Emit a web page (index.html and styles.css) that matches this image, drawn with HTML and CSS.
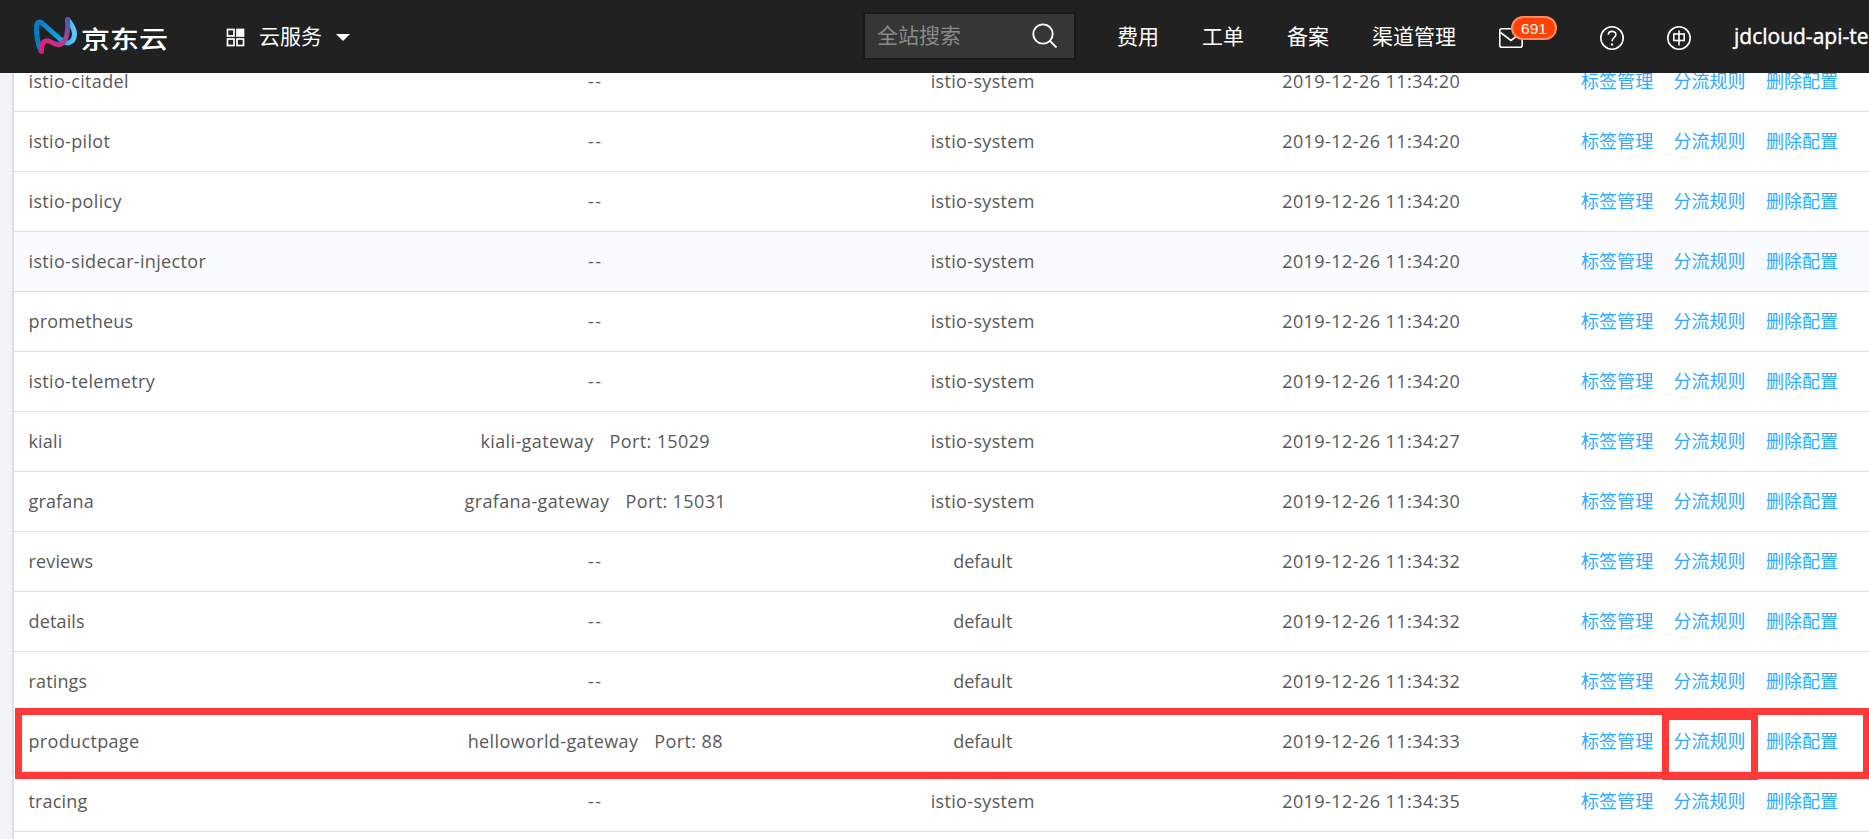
FILE: index.html
```html
<!DOCTYPE html>
<html lang="zh-CN">
<head>
<meta charset="utf-8">
<title>京东云</title>
<link rel="stylesheet" href="styles.css">
</head>
<body>
<header class="topbar">
  <a class="logo">
    <svg class="logo-mark" width="46" height="42" viewBox="0 0 46 42" fill="none" stroke-linecap="round" stroke-linejoin="round">
      <defs>
        <linearGradient id="blue" x1="0" y1="0" x2="1" y2="0"><stop offset="0" stop-color="#0879c0"/><stop offset=".6" stop-color="#0da5e2"/><stop offset="1" stop-color="#5cc8f5"/></linearGradient>
        <linearGradient id="pink" x1="0" y1="1" x2="1" y2="0"><stop offset="0" stop-color="#f0117f"/><stop offset=".55" stop-color="#b83c90"/><stop offset="1" stop-color="#4c5cad"/></linearGradient>
      </defs>
      <path d="M8 35C4 27 3 15 3.500 10C4 6 6.500 5 9.500 7.500L27 23C34 30 41 27 41.500 18C41.500 12 38 8 35 4" stroke="url(#blue)" stroke-width="5"/>
      <path d="M8.500 35.500C8 25 13 23 18 26C29 33 36 25 34.500 3.500" stroke="url(#pink)" stroke-width="5"/>
    </svg>
    <span class="logo-text">京东云</span>
  </a>
  <a class="services">
    <svg width="20" height="20" viewBox="0 0 20 20" fill="none" stroke="#fff" stroke-width="1.700"><rect x="1.500" y="1.500" width="6.500" height="6.500"/><rect x="11" y="1.500" width="6.500" height="6.500" fill="#fff"/><rect x="1.500" y="11" width="6.500" height="6.500"/><rect x="11" y="11" width="6.500" height="6.500"/></svg>
    <span class="services-text">云服务</span>
    <svg width="14" height="7" viewBox="0 0 14 7"><path d="M0 0H14L7 7Z" fill="#fff"/></svg>
  </a>
  <div class="search">
    <span>全站搜索</span>
    <svg width="26" height="26" viewBox="0 0 26 26" fill="none" stroke="#fff" stroke-width="1.800"><circle cx="11" cy="11" r="9.700"/><path d="M18 18L24.500 24.500"/></svg>
  </div>
  <nav class="nav">
    <a>费用</a><a>工单</a><a>备案</a><a>渠道管理</a>
  </nav>
  <div class="mail">
    <svg width="24" height="20" viewBox="0 0 24 20" fill="none" stroke="#fff" stroke-width="1.600"><rect x=".8" y=".8" width="22.400" height="18.400" rx="2"/><path d="M1.500 4.500L12 12.500L22.500 4.500"/></svg>
    <span class="badge">691</span>
  </div>
  <svg class="help" width="24" height="24" viewBox="0 0 24 24" fill="none" stroke="#fff" stroke-width="1.600"><circle cx="12" cy="12" r="11.200"/><path d="M8.300 8.800C8.300 4.200 15.900 4.300 15.900 8.600C15.900 11.300 12 11.800 12 15.300"/><path d="M12 17.500V19.500" stroke-width="2.200"/></svg>
  <svg class="lang" width="24" height="24" viewBox="0 0 24 24" fill="none" stroke="#fff" stroke-width="1.600"><circle cx="12" cy="12" r="11.200"/><rect x="6.800" y="8" width="10.400" height="6.500"/><path d="M12 4.500V19.500"/></svg>
  <span class="user">jdcloud-api-te</span>
</header>
<main class="panel">
  <div class="row"><span class="name wide">istio-citadel</span><span class="none">--</span><span class="wide">istio-system</span><span class="time">2019-12-26 11:34:20</span><div class="actions"><a>标签管理</a><a>分流规则</a><a>删除配置</a></div></div>
  <div class="row"><span class="name wide">istio-pilot</span><span class="none">--</span><span class="wide">istio-system</span><span class="time">2019-12-26 11:34:20</span><div class="actions"><a>标签管理</a><a>分流规则</a><a>删除配置</a></div></div>
  <div class="row"><span class="name wide">istio-policy</span><span class="none">--</span><span class="wide">istio-system</span><span class="time">2019-12-26 11:34:20</span><div class="actions"><a>标签管理</a><a>分流规则</a><a>删除配置</a></div></div>
  <div class="row active"><span class="name wide">istio-sidecar-injector</span><span class="none">--</span><span class="wide">istio-system</span><span class="time">2019-12-26 11:34:20</span><div class="actions"><a>标签管理</a><a>分流规则</a><a>删除配置</a></div></div>
  <div class="row"><span class="name">prometheus</span><span class="none">--</span><span class="wide">istio-system</span><span class="time">2019-12-26 11:34:20</span><div class="actions"><a>标签管理</a><a>分流规则</a><a>删除配置</a></div></div>
  <div class="row"><span class="name wide">istio-telemetry</span><span class="none">--</span><span class="wide">istio-system</span><span class="time">2019-12-26 11:34:20</span><div class="actions"><a>标签管理</a><a>分流规则</a><a>删除配置</a></div></div>
  <div class="row"><span class="name">kiali</span><span class="gateway"><span>kiali-gateway</span><span>Port: 15029</span></span><span class="wide">istio-system</span><span class="time">2019-12-26 11:34:27</span><div class="actions"><a>标签管理</a><a>分流规则</a><a>删除配置</a></div></div>
  <div class="row"><span class="name">grafana</span><span class="gateway"><span>grafana-gateway</span><span>Port: 15031</span></span><span class="wide">istio-system</span><span class="time">2019-12-26 11:34:30</span><div class="actions"><a>标签管理</a><a>分流规则</a><a>删除配置</a></div></div>
  <div class="row"><span class="name">reviews</span><span class="none">--</span><span>default</span><span class="time">2019-12-26 11:34:32</span><div class="actions"><a>标签管理</a><a>分流规则</a><a>删除配置</a></div></div>
  <div class="row"><span class="name">details</span><span class="none">--</span><span>default</span><span class="time">2019-12-26 11:34:32</span><div class="actions"><a>标签管理</a><a>分流规则</a><a>删除配置</a></div></div>
  <div class="row"><span class="name">ratings</span><span class="none">--</span><span>default</span><span class="time">2019-12-26 11:34:32</span><div class="actions"><a>标签管理</a><a>分流规则</a><a>删除配置</a></div></div>
  <div class="row marked"><span class="name wide">productpage</span><span class="gateway"><span>helloworld-gateway</span><span>Port: 88</span></span><span>default</span><span class="time">2019-12-26 11:34:33</span><div class="actions"><a>标签管理</a><a class="marked-link">分流规则</a><a>删除配置</a></div></div>
  <div class="row"><span class="name">tracing</span><span class="none">--</span><span class="wide">istio-system</span><span class="time">2019-12-26 11:34:35</span><div class="actions"><a>标签管理</a><a>分流规则</a><a>删除配置</a></div></div>
</main>
</body>
</html>
```
FILE: styles.css
```css
*, *::after { box-sizing: border-box; }
html, body { height: 100%; }
body {
  margin: 0;
  padding-left: 12px;
  overflow: hidden;
  background: #f2f3f6;
  font-family: "Open Sans", "Noto Sans CJK SC", sans-serif;
  font-size: 18px;
  color: #595959;
}
.topbar {
  position: relative;
  z-index: 2;
  display: flex;
  align-items: center;
  height: 73px;
  margin-left: -12px;
  padding-left: 33px;
  background: #212121;
  color: #fff;
  font-size: 21px;
  white-space: nowrap;
  overflow: hidden;
}
.topbar > * { flex: none; }
.logo { display: flex; align-items: center; gap: 2px; width: 193px; }
.logo-text {
  font-family: "Noto Sans CJK SC", sans-serif;
  font-size: 29px;
  line-height: 32px;
  font-weight: 500;
  transform: scaleY(.82);
}
.services { display: flex; align-items: center; width: 637px; padding-top: 2px; }
.services-text { margin: -3px 14px 0 13px; line-height: 30px; }
.search {
  display: flex;
  align-items: center;
  justify-content: space-between;
  width: 213px;
  height: 48px;
  margin: -1px 41px 0 0;
  padding: 0 16px 0 12px;
  border: 2px solid #191919;
  background: #363636;
  color: #8a8a8a;
  line-height: 30px;
}
.search span { margin-top: -2px; }
.nav { display: flex; gap: 43px; width: 382px; margin-top: -3px; }
.mail { position: relative; height: 20px; width: 101px; margin-top: 3px; line-height: 0; }
.badge {
  position: absolute;
  left: 12px;
  top: -12px;
  width: 46px;
  height: 24px;
  border: 2px solid #ff8a66;
  border-radius: 12px;
  background: #ff4200;
  font: 15.5px/21px "Liberation Sans", sans-serif;
  text-align: center;
}
.help { margin: 3px 43px 0 0; }
.lang { margin: 3px 43px 0 0; }
.user { margin-top: -2px; -webkit-text-stroke: .4px #fff; }
.panel {
  height: 787px;
  margin-top: -21px;
  border-left: 2px solid #d9e1e9;
  background: #fff;
}
.row {
  position: relative;
  display: grid;
  grid-template-columns: 386px 388.5px 388.5px 388.5px 1fr;
  align-items: center;
  height: 60px;
  padding-bottom: 2px;
  border-bottom: 1px solid #d9e1e9;
  line-height: 26px;
  text-align: center;
  white-space: nowrap;
}
.row.active { background: #fafbfe; }
.name { padding-left: 14.500px; text-align: left; letter-spacing: .15px; }
.wide { letter-spacing: .34px; }
.none { padding-left: 2px; letter-spacing: 1.500px; }
.gateway { display: flex; justify-content: center; gap: 16px; padding-left: 2px; letter-spacing: .38px; }
.time { letter-spacing: .44px; }
.actions { display: flex; gap: 20.200px; padding-left: 15.500px; color: #2eaaff; letter-spacing: .06px; }
.marked::after {
  content: "";
  position: absolute;
  z-index: 1;
  left: 1px;
  right: -1px;
  top: -4px;
  height: 71px;
  border: 7px solid #ff3838;
}
.marked-link { position: relative; }
.marked-link::after {
  content: "";
  position: absolute;
  z-index: 1;
  left: -11px;
  top: -15px;
  width: 96px;
  height: 67px;
  border: 7px solid #ff3838;
}
```
